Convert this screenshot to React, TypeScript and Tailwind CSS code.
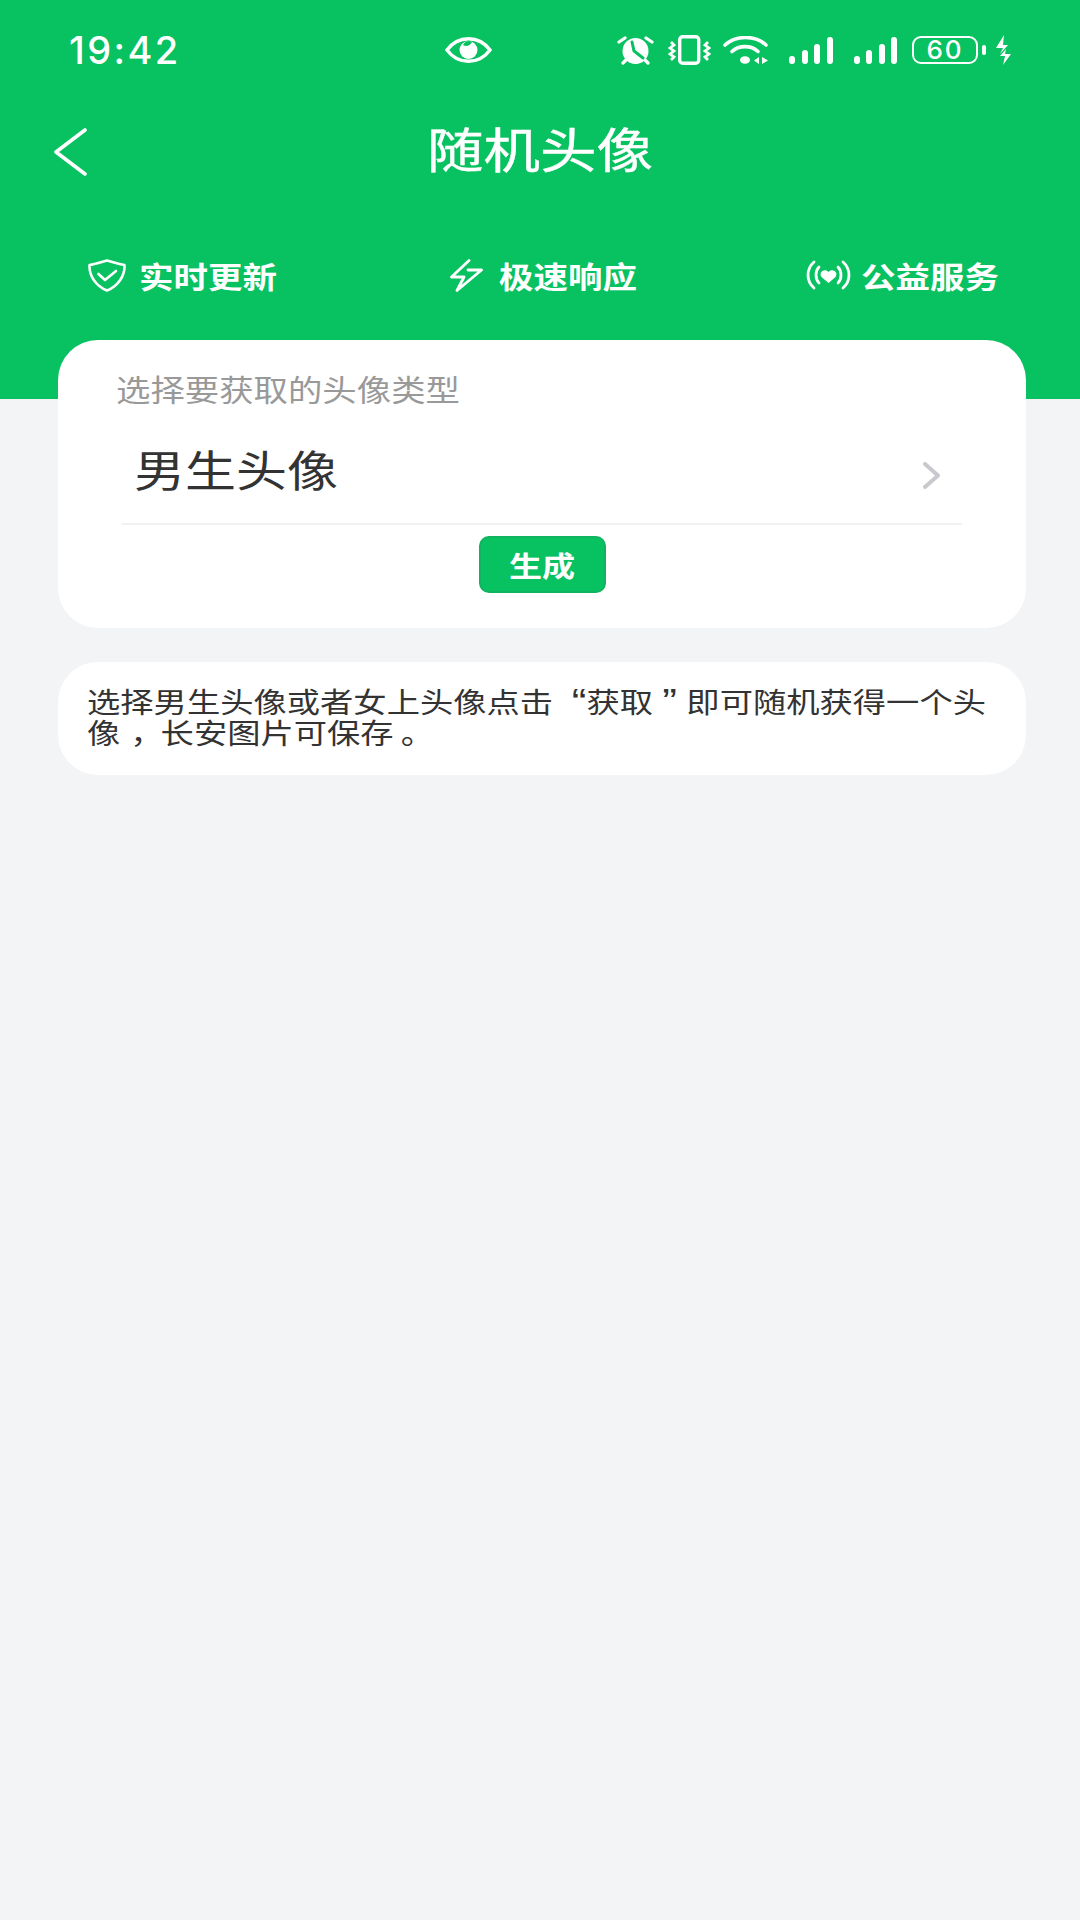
const CJK = "font-['Noto_Sans_CJK_SC','Noto_Sans',sans-serif]"

function AlarmIcon() {
  return (
    <svg width="37" height="30" viewBox="0 0 37 30">
      <path d="M2 7 L8 3 M35 7 L29 3" stroke="white" strokeWidth="3.2" strokeLinecap="round" />
      <circle cx="18.5" cy="16" r="13" fill="white" />
      <path d="M6 28 L9 25 M31 28 L28 25" stroke="white" strokeWidth="3.2" strokeLinecap="round" />
      <path d="M15 7 L17 16 L26 23" stroke="#08c160" strokeWidth="3" fill="none" strokeLinecap="round" />
    </svg>
  )
}

function VibrateIcon() {
  return (
    <svg width="43" height="30" viewBox="0 0 43 30" fill="none" stroke="white">
      <rect x="11.7" y="1.7" width="19" height="26.6" rx="3" strokeWidth="3.4" />
      <path d="M3 7 L6 10 L2 13 L6 16 L2 19 L6 22 L3 25" strokeWidth="2.8" />
      <path d="M40 7 L37 10 L41 13 L37 16 L41 19 L37 22 L40 25" strokeWidth="2.8" />
    </svg>
  )
}

function WifiIcon() {
  return (
    <svg width="45" height="28" viewBox="0 0 45 28" fill="none">
      <path d="M2 9 C13 -1 32 -1 43 9" stroke="white" strokeWidth="3.6" strokeLinecap="round" />
      <path d="M9 15.5 C16 9 28 9 35 15.5" stroke="white" strokeWidth="3.6" strokeLinecap="round" />
      <ellipse cx="22" cy="24" rx="5" ry="3.8" fill="white" />
      <path d="M36 21 L31 24.5 L36 28 Z M39 21 L45 24.5 L39 28 Z" fill="white" />
    </svg>
  )
}

function SignalIcon({ className }: { className: string }) {
  return (
    <div className={`flex items-end gap-[6.5px] h-[27px] ${className}`}>
      <div className="w-[6px] h-[8px] rounded-full bg-white" />
      <div className="w-[6px] h-[14px] rounded-full bg-white" />
      <div className="w-[6px] h-[20px] rounded-full bg-white" />
      <div className="w-[6px] h-[27px] rounded-full bg-white" />
    </div>
  )
}

function BoltIcon() {
  return (
    <svg width="16" height="30" viewBox="0 0 16 30" fill="white">
      <path d="M9 0 L1 13 L8 13 L5 19 L13 10 L8 10 Z" />
      <path d="M11 14 L5 21 L10 21 L8 30 L16 19 L10 19 Z" />
    </svg>
  )
}

function ShieldIcon() {
  return (
    <svg width="38" height="33" viewBox="0 0 38 33" fill="none" stroke="white" strokeWidth="2.6" strokeLinecap="round" strokeLinejoin="round">
      <path d="M1.5 6 C8 5 13 3 19 1.5 C25 3 30 5 36.5 6 C37 17 30 27 19 31.5 C8 27 1 17 1.5 6 Z" />
      <path d="M10.5 15 L17 21 L28 12" />
    </svg>
  )
}

function FlashIcon() {
  return (
    <svg width="33" height="33" viewBox="0 0 33 33" fill="none" stroke="white" strokeWidth="2.8" strokeLinecap="round" strokeLinejoin="round">
      <path d="M19 1.5 L1.5 18 L14 18 L7 31.5 L31.5 11 L18 11" />
    </svg>
  )
}

function HeartWaveIcon() {
  return (
    <svg width="45" height="30" viewBox="0 0 45 30" fill="none" stroke="white" strokeWidth="2.8" strokeLinecap="round">
      <path d="M8 2 C0 9 0 21 8 28" />
      <path d="M13 7 C9 11 9 19 13 23" />
      <path d="M37 2 C45 9 45 21 37 28" />
      <path d="M32 7 C36 11 36 19 32 23" />
      <path d="M22.5 23 L15.5 17 C12 12 19 8 22.5 12 C26 8 33 12 29.5 17 Z" fill="white" stroke="none" />
    </svg>
  )
}

function Feature({ icon, label, className }: { icon: React.ReactNode; label: string; className: string }) {
  return (
    <div className={`flex items-center ${className}`}>
      {icon}
      <span className="inline-block scale-y-[0.85] text-[34.5px] leading-[40px] font-bold text-white">{label}</span>
    </div>
  )
}

export default function App() {
  return (
    <div className={`w-[1080px] h-[1920px] bg-[#f3f4f6] ${CJK}`}>
      <div className="h-[399px] bg-[#08c160] flex flex-col">
        {/* status bar */}
        <div className="h-[100px] flex items-center pl-[69px] pr-[69px]">
          <span className="inline-block w-[376px] font-['Inter',sans-serif] text-[38px] leading-[40px] font-medium tracking-[2.4px] text-white">19:42</span>
          <svg width="47" height="26" viewBox="0 0 47 26">
            <path d="M2 13 C13 -2 34 -2 45 13 C34 28 13 28 2 13 Z" fill="none" stroke="white" strokeWidth="3.4" />
            <circle cx="23.5" cy="13" r="9" fill="white" />
            <path d="M18 8 C21 10 25 9 27 5 C24 3 20 4 18 8 Z" fill="#08c160" />
          </svg>
          <div className="ml-auto flex items-center">
            <AlarmIcon />
            <div className="ml-[14px]"><VibrateIcon /></div>
            <div className="ml-[12px]"><WifiIcon /></div>
            <SignalIcon className="ml-[21px]" />
            <SignalIcon className="ml-[21px]" />
            <div className="ml-[15px] w-[66px] h-[28px] rounded-[9px] border-2 border-white flex items-center justify-center font-['Inter',sans-serif] text-[26px] leading-none font-medium tracking-[2px] text-white">60</div>
            <div className="ml-[4px] w-[4px] h-[10px] rounded-full bg-white" />
            <div className="ml-[9px]"><BoltIcon /></div>
          </div>
        </div>

        {/* title */}
        <div className="h-[100px] flex items-center justify-center relative">
          <svg width="34" height="48" viewBox="0 0 34 48" fill="none" className="absolute left-[54px] top-[28px]">
            <path d="M31 2 L2 24 L31 46" stroke="white" strokeWidth="3.6" strokeLinecap="round" strokeLinejoin="round" />
          </svg>
          <h1 className="inline-block -mt-[7px] scale-y-[0.85] text-[56.5px] leading-[60px] font-normal [-webkit-text-stroke:0.5px_#ffffff] text-white">随机头像</h1>
        </div>

        {/* features */}
        <div className="mt-[55px] pl-[88px] pr-[81px] flex justify-between items-center">
          <Feature icon={<ShieldIcon />} label="实时更新" className="gap-[13px]" />
          <Feature icon={<FlashIcon />} label="极速响应" className="gap-[16px] ml-[4px]" />
          <Feature icon={<HeartWaveIcon />} label="公益服务" className="gap-[10px]" />
        </div>
      </div>

      <div className="ml-[58px] mr-[54px] -mt-[59px] relative flex flex-col gap-[34px]">
        <div className="bg-white rounded-[40px] pt-[23px] pb-[35px] flex flex-col">
          <div className="pl-[58px] h-[50px] flex items-center">
            <span className="inline-block scale-y-[0.85] text-[34.4px] leading-[40px] text-[#999999]">选择要获取的头像类型</span>
          </div>
          <div className="mx-[64px] border-b-2 border-[#f0f1f3]">
            <div className="h-[110px] pl-[12px] pr-[22px] flex items-center justify-between">
              <span className="inline-block scale-y-[0.85] text-[51px] leading-[60px] text-[#333333]">男生头像</span>
              <svg width="17" height="27" viewBox="0 0 17 27" fill="none" className="mt-[14px]">
                <path d="M2 2 L15 13.5 L2 25" stroke="#c8c9cc" strokeWidth="4" strokeLinecap="round" strokeLinejoin="round" />
              </svg>
            </div>
          </div>
          <button className="mt-[11px] self-center w-[127px] h-[57px] rounded-[10px] bg-[#08c160] border-2 border-[#10b35f] flex items-center justify-center">
            <span className="inline-block scale-y-[0.85] text-[33px] leading-[40px] font-bold text-white">生成</span>
          </button>
        </div>

        <div className="bg-white rounded-[40px] h-[113px] pl-[29px] pr-[30px] pb-[1px] flex flex-col justify-center">
          <div className="font-['Liberation_Sans','Noto_Sans_CJK_SC',sans-serif] text-[33.3px] leading-[40px] text-[#333333] scale-y-[0.85]">
            <div className="h-[40px] whitespace-nowrap">
              选择男生头像或者女上头像点击
              <span className="inline-block w-[33.3px] text-right text-[44px] leading-none align-[-3px]">“</span>
              获取
              <span className="inline-block w-[33.3px] text-center text-[44px] leading-none align-[-3px]">”</span>
              即可随机获得一个头
            </div>
            <div className="h-[40px] whitespace-nowrap">
              像<span className="ml-[10px] -mr-[3px]">，</span>长安图片可保存<span className="ml-[7px]">。</span>
            </div>
          </div>
        </div>
      </div>
    </div>
  )
}
